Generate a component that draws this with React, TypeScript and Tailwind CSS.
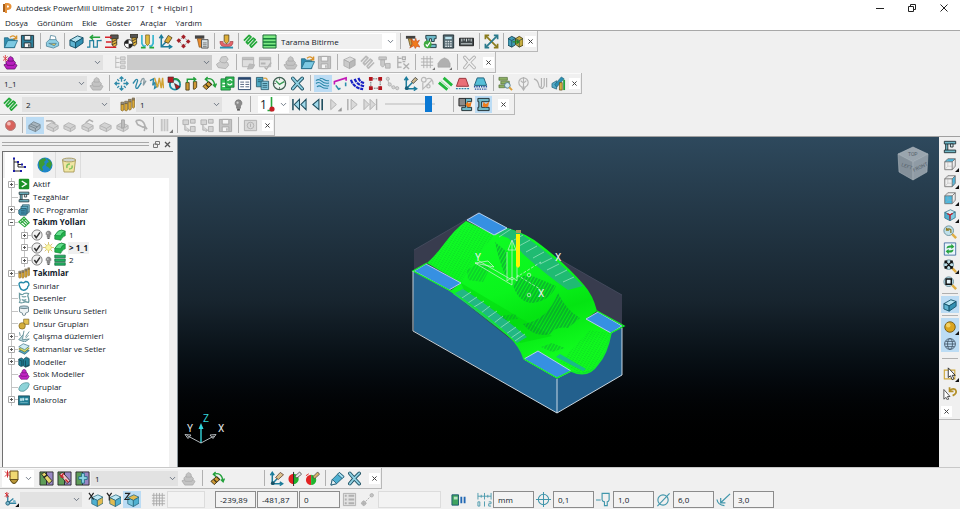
import type { ReactNode } from "react";
import { ChevronDown } from "lucide-react";
import clsx from "clsx";

// Shapes that several icons share
const cube = (top: string, left: string, right: string, line: string) => (
  <g stroke={line} strokeWidth="0.8" strokeLinejoin="round">
    <path d="M2 5 8.5 2 14 4.5 8 8z" fill={top} />
    <path d="M2 5 8 8v6.5l-6-3z" fill={left} />
    <path d="M14 4.5 8 8v6.5l6-3.5z" fill={right} />
  </g>
);

const stockPile = (fill: string, line: string) => (
  <g fill={fill} stroke={line} strokeWidth="0.8">
    <path d="M1 10.5 4 9l8-.5 3 2.5-2.5 4H4z" />
    <path d="M3 7.5 5 5.5h6l2.3 2.5-1.8 3h-7z" />
    <path d="M5.5 3.5 8 1.5l2.7 1.8.3 3.2H5.5z" />
  </g>
);

const floppy = (body: string, line: string) => (
  <g stroke={line}>
    <path d="M1.5 1.5h13v13h-13z" fill={body} />
    <path d="M4.5 1.5h7v5h-7zM4.5 9.5h7v5h-7z" fill="#f4f4f4" />
    <path d="M9.5 11v2.5" strokeWidth="1.5" />
  </g>
);

const tool = (
  <g stroke="#3a3526" strokeWidth="0.9">
    <path d="M6 1h8v4H6z" fill="#555" />
    <path d="M7.5 5h5v6.5L10 14l-2.5-2.5z" fill="#e0b13a" />
    <path d="m7.5 8.5 5-2.5M7.5 11.5l5-2.5" />
  </g>
);

const viewCube = (face: ReactNode) => (
  <g strokeLinejoin="round">
    {face}
    <path
      d="M2 5.5h8.5v9H2zM5.5 2H14v8.5l-3.5 4M2 5.5 5.5 2M10.5 5.5 14 2"
      fill="none"
      stroke="#666"
      strokeWidth="0.9"
    />
    <path d="M5.5 2v8.5H14M5.5 10.5 2 14.5" fill="none" stroke="#aaa" strokeWidth="0.5" />
  </g>
);

const snake = (color: string) => (
  <path
    d="M1 7 6.5 1.5 8.5 3 3.5 8.5 5 10.5 11 4.5 13 6 7.5 12 9 14l6-6"
    fill="none"
    stroke={color}
    strokeWidth="1.8"
    strokeLinejoin="round"
  />
);

const lens = (
  <g>
    <circle cx="6.5" cy="6.5" r="5.5" fill="#bfe0ea" stroke="#648a98" />
    <path d="m10.5 10.5 4.5 4.5" stroke="#dfae45" strokeWidth="2.8" />
  </g>
);

const graySteps = (
  <g fill="#d2d2d2" stroke="#a9a9a9" strokeWidth="0.8">
    <path d="m2 8 5-3 7 3v3.5l-5 3-7-3z" />
    <path d="m2 8 7 3.2 5-3.2M9 11.2v3.3" />
  </g>
);

const ring = "M3 2.5q4 5 10 11M13 2.5Q8 7 3 13.5";

const axes = (
  <g fill="none" stroke="#1b7c9b" strokeWidth="1.6">
    <path d="M3.5 2v11.5H14M3.5 13.5 10 7" />
    <path d="M1.5 4.5 3.5 1.5l2 3M11.5 11.5l3 2-3 2" />
  </g>
);

const icons: Record<string, ReactNode> = {
  open: (
    <g stroke="#1c6680" strokeWidth="0.8">
      <path d="M1.5 4h4l1 1.5h6v9h-11z" fill="#2f8db0" />
      <path d="M1.5 14.5 5 7h10.5L12 14.5z" fill="#7cc9e2" />
      <path d="M7.5 3.5Q11 0 14 4.5M14.5 1.5v3.5h-3.5" fill="none" stroke="#d8922b" strokeWidth="1.5" />
    </g>
  ),
  save: floppy("#2e7f9b", "#24333a"),
  print: (
    <g stroke="#487e94" strokeWidth="0.8">
      <path d="m5 7 1-5.5 5 1 1 4.5z" fill="#fff" />
      <path d="m1.5 9 3-3h7l3 3v3.5L9 15l-7.5-2z" fill="#8fcfe4" />
      <path d="m4 10h8l-2 2.5z" fill="#e8c75b" />
    </g>
  ),
  block: (
    <g stroke="#155168" strokeLinejoin="round">
      <path d="M1 6.5 9 2l6 2-8 5z" fill="#b4e3f1" />
      <path d="m1 6.5 6 2.5v6l-6-2.5z" fill="#5fb4d1" />
      <path d="m7 9 8-5v5.5L7 15z" fill="#3391b3" />
    </g>
  ),
  rapid: (
    <g fill="none" strokeWidth="1.3">
      <path d="M0 14h3V7h4v7h4V7h4v-1" stroke="#21809e" />
      <path d="M14 3.5H4M6.5 1 3.5 3.5l3 2.5" stroke="#24a23b" strokeWidth="1.5" />
    </g>
  ),
  feeds: (
    <g>
      {tool}
      <path d="M0 3.5h7M1 8.5h6M0 14h12" stroke="#d5222a" strokeWidth="1.6" />
    </g>
  ),
  ballTool: (
    <g>
      <g transform="translate(2 -1)">{tool}</g>
      <circle cx="6" cy="10.5" r="4.5" fill="#fff" stroke="#333" />
      <path d="M6 6v4.5H1.5A4.5 4.5 0 0 1 6 6M6 15v-4.5h4.5A4.5 4.5 0 0 1 6 15" fill="#222" />
    </g>
  ),
  leads: (
    <g fill="none" strokeWidth="1.8">
      <path d="M2 1v9q2 5 4 2M14 1v9q-2 5-4 2" stroke="#3ab6cf" />
      <path d="M1 14.5h5M10 14.5h5" stroke="#26a83a" />
      <path d="M6 1h4v9l-2 2.5L6 10z" fill="#e2be3d" stroke="#7a6124" strokeWidth="0.8" />
    </g>
  ),
  startPoint: (
    <g>
      {axes}
      <path d="m7 8 4-6.5 4 2.5-4 6z" fill="#d8ac38" stroke="#443818" strokeWidth="0.8" />
    </g>
  ),
  dots: (
    <g>
      <path d="m3 7 5-4 5 5-5 5z" fill="none" stroke="#777" strokeDasharray="1.5 1" />
      <g fill="#a32028">
        <path d="m3 4.5 2.5 2.5L3 9.5.5 7z" />
        <path d="m8 .5 2.5 2.5L8 5.5 5.5 3z" />
        <path d="m13 5.5 2.5 2.5-2.5 2.5L10.5 8z" />
        <path d="m8 10.5 2.5 2.5L8 15.5 5.5 13z" />
      </g>
    </g>
  ),
  toolCalc: (
    <g>
      <path d="M1 1.5h10V5H1z" fill="#444" />
      <path d="M3.5 5h5v9h-3z" fill="#eb8c2c" stroke="#6f4415" strokeWidth="0.6" />
      <path d="M8 6h7v9H8z" fill="#d8e1e4" stroke="#555" />
      <path d="M9.5 9.5h4M9.5 11.5h4M9.5 13.5h4" stroke="#777" />
    </g>
  ),
  verify: (
    <g>
      <path d="M1 8q0 6 7 6t7-6h-3q0 3-4 3T4 8z" fill="#e5646a" stroke="#8e2b31" strokeWidth="0.6" />
      <path d="M1 14.5h14" stroke="#2c90b0" strokeWidth="2" />
      <path d="M5.5 1h5v7L8 10.5 5.5 8z" fill="#e0b13a" stroke="#4e3f19" strokeWidth="0.8" />
    </g>
  ),
  path: snake("#22a838"),
  strategy: (
    <g>
      <path d="M1 1h14v14H1z" fill="#7dea83" stroke="#1b5f33" />
      <path d="M1 5h14M1 8.5h14M1 12h14" stroke="#167f3a" strokeWidth="1.5" />
    </g>
  ),
  collision: (
    <g>
      <path d="M1 2h10v3H1z" fill="#414141" />
      <path d="M3.5 5h4v8h-2z" fill="#c4a050" stroke="#584312" strokeWidth="0.7" />
      <path d="m6 5 4 3 1.5-3.5 1 3.5 3-1.5-2 3.5 2.5 4-3.5-1-1.5 2.5-1.5-3L5 15l3-4.5z" fill="#f07a1c" stroke="#b9310e" strokeWidth="0.5" />
    </g>
  ),
  machineOk: (
    <g>
      <path d="M3 1.5h11V5h-2v3h-3V5H7v6h7v3.5H4V5H3z" fill="#6db9c8" stroke="#223b42" />
      <circle cx="5" cy="11" r="4.2" fill="#3faa40" />
      <path d="m3 11 1.5 2 3-4" fill="none" stroke="#fff" strokeWidth="1.3" />
    </g>
  ),
  calculator: (
    <g>
      <path d="M2.5 1h11v14h-11z" fill="#566a72" stroke="#26343a" />
      <path d="M4.5 3h7v2.5h-7z" fill="#b9e3ee" />
      <path d="M4.5 8h7M4.5 10.5h7M4.5 13h7" stroke="#e1e8ea" strokeWidth="1.5" strokeDasharray="1.7 0.9" />
    </g>
  ),
  ruler: (
    <g>
      <path d="M.5 4.5h15v8H.5z" fill="#41484b" stroke="#222" />
      <path d="M3 5v3M5.5 5v2M8 5v3M10.5 5v2M13 5v3M2 10.5h12" stroke="#dfe6e8" />
    </g>
  ),
  expand: (
    <g stroke="#8a7b1c" strokeWidth="1.8" fill="none">
      <path d="m2 2 12 12" />
      <path d="M14 2 2 14" stroke="#2b7a8c" />
      <path d="M1.5 5.5v-4h4M14.5 10.5v4h-4" />
      <path d="M10.5 1.5h4v4M5.5 14.5h-4v-4" stroke="#2b7a8c" />
    </g>
  ),
  components: (
    <g strokeWidth="0.9">
      <path d="m0 5 4-2.5 4 2v7L4 14l-4-2z" fill="#419cb6" stroke="#173f4d" />
      <path d="m8 5 4-2.5 4 2.5v7l-4 2-4-3z" fill="#c6ad42" stroke="#4e4212" />
      <path d="M0 5l4 2 4-2.5M4 7v7M8 5l4 2 4-2M12 7v7" fill="none" stroke="#173f4d" strokeWidth="0.7" />
      <path d="M5 8.5h6M9 6.5l2.5 2-2.5 2" stroke="#23862d" strokeWidth="1.3" fill="none" />
    </g>
  ),
  stock: (
    <g>
      {stockPile("#b91fc0", "#5e0f66")}
      <path d="M0 1.5l5 4.5M5 1.5L0 6M2.5 0v7" stroke="#d8363a" strokeWidth="0.9" />
    </g>
  ),
  stockPlain: stockPile("#c223c4", "#661070"),
  stockOff: stockPile("#c3c3c3", "#a9a9a9"),
  treeOff: (
    <path d="M4 1v13M4 3.5h4M4 8h4M4 13h4M9 2h5v3H9zM9 6.5h5v3H9zM9 11.5h5v3H9z" fill="#d8d8d8" stroke="#bbb" />
  ),
  refreshOff: (
    <g fill="#cdcdcd" stroke="#a8a8a8" strokeWidth="0.8">
      <path d="m1.5 10 4-3 8 1 1 3-3 3.5-8-1z" />
      <path d="m5 6 2-4 5-.5 2 3-3 4-4-.5z" />
    </g>
  ),
  tableOff: (
    <g fill="#dedede" stroke="#b4b4b4">
      <path d="M1.5 2.5h12v10h-12z" />
      <path d="M1.5 4.5h12" strokeWidth="2" />
      <path d="m7 15 2-5.5 5.5 1-2 4z" fill="#bcbcbc" />
    </g>
  ),
  tableCheckOff: (
    <g fill="#dedede" stroke="#b4b4b4">
      <path d="M1.5 2.5h12v10h-12z" />
      <path d="M1.5 4.5h12M3 9h5" strokeWidth="2" />
      <path d="m7 13 2 2 5-7" fill="none" strokeWidth="1.6" />
    </g>
  ),
  saveOff: floppy("#c4c4c4", "#a9a9a9"),
  cubeOff: cube("#dcdcdc", "#cacaca", "#b9b9b9", "#a6a6a6"),
  snakeOff: snake("#b9b9b9"),
  toolOff: (
    <g fill="#c9c9c9" stroke="#adadad" strokeWidth="0.9">
      <path d="M2 2h8v3H2zM4 5h4v6l-2 2-2-2zM9 9h5v5H9z" />
    </g>
  ),
  treeCrossOff: (
    <path d="M3 1v13M3 3.5h4M3 8h4M3 13h4M8 2h3v3H8zM8 7h3M9 9l6 6M15 9l-6 6" fill="none" stroke="#b0b0b0" strokeWidth="1.4" />
  ),
  gridOff: (
    <g>
      <path d="M4 1v13M7.5 1v13M11 1v13M1 4h13M1 7.5h13M1 11h13" stroke="#b0b0b0" />
      <path d="M13 16h3v-3z" fill="#777" />
    </g>
  ),
  wedgeOff: (
    <g>
      <path d="m1 9 3-4 4-2 4 2 2 4v4H1z" fill="#b0b0b0" stroke="#a0a0a0" strokeWidth="0.6" />
      <path d="M13 16h3v-3z" fill="#777" />
    </g>
  ),
  crossOff: (
    <g fill="none" strokeLinecap="round">
      <path d={ring} stroke="#b0b0b0" strokeWidth="3.6" />
      <path d={ring} stroke="#efefef" strokeWidth="1.8" />
    </g>
  ),
  cross: (
    <g fill="none" strokeLinecap="round">
      <path d={ring} stroke="#1d4f61" strokeWidth="3.8" />
      <path d={ring} stroke="#8fd0e2" strokeWidth="2" />
    </g>
  ),
  spread: (
    <path
      d="M8 1v5M8 10v5M1 8h5M10 8h5M6 3l2-2 2 2M6 13l2 2 2-2M3 6 1 8l2 2M13 6l2 2-2 2M3.5 3.5l2 2M12.5 3.5l-2 2M3.5 12.5l2-2M12.5 12.5l-2-2"
      fill="none"
      stroke="#2d89a8"
      strokeWidth="1.4"
    />
  ),
  wave: (
    <g fill="none" strokeWidth="1.4">
      <path d="m1 8 3-4q2-1 2 1L4 11q0 3 2 2l4-6" stroke="#2d89a8" />
      <path d="m9 7 2-4q2-1 2 1l-1 6 3-5" stroke="#8a9da4" />
    </g>
  ),
  waveGold: (
    <g fill="none" strokeWidth="1.5">
      <path d="m1 5 4-2-1 7 3-4-1 7 4-3" stroke="#2d89a8" />
      <path d="m6 2 3 10 2-10 2 11 1.5-11 1 11" stroke="#d1a335" />
    </g>
  ),
  clockTool: (
    <g>
      <circle cx="8.5" cy="9" r="5.5" fill="#dff2f6" stroke="#1e8ea6" strokeWidth="2" />
      <path d="M1 1h6v6H1z" fill="#b31d24" stroke="#222" strokeWidth="0.5" />
      <path d="m8 8 6 3.5-4 3z" fill="#b31d24" stroke="#222" strokeWidth="0.6" />
      <path d="M7 3q5-1 7 4" fill="none" stroke="#21963a" strokeWidth="1.6" />
    </g>
  ),
  toolsArc: (
    <g>
      <path d="M2 15V7h3.5v8zM10 14V6h3.5v6l-2 2z" fill="#cf9a35" stroke="#4a3a14" strokeWidth="0.9" />
      <path d="M3.5 7V3.5H12v2M10 1.5l2.500 2L10 6" fill="none" stroke="#23a13c" strokeWidth="1.5" />
    </g>
  ),
  toolTurn: (
    <g>
      <path d="m1 11 6-5 3.5 3-6 5.5z" fill="#cf9a35" stroke="#3d3214" />
      <path d="m4 9 3 3M7 6l3.5 3.5" stroke="#3d3214" strokeWidth="1.3" />
      <path d="M4 3.5q8-3 10 7M6 1 3.5 3.5 6.5 6M11.5 9l2.5 2.5 1.5-3.5" fill="none" stroke="#23a13c" strokeWidth="1.4" />
    </g>
  ),
  recycle: (
    <g>
      <path d="M1 3h10v12H1z" fill="#35c159" stroke="#127433" strokeWidth="0.8" />
      <path d="M6 1h9v11H6z" fill="#2fb352" stroke="#127433" strokeWidth="0.8" />
      <path d="M8 5q3-3 5 0M13 8q-3 3-5 0M2.5 8h3M2.5 11h3" fill="none" stroke="#fff" strokeWidth="1.4" />
    </g>
  ),
  table: (
    <g>
      <path d="M1.5 1.5h13v13h-13z" fill="#fff" stroke="#27456c" />
      <path d="M1.5 3h13" stroke="#27456c" strokeWidth="2" />
      <path d="M3.5 6.5h4M3.5 9h4M3.5 11.5h4M9 6.5h4M9 9h4M9 11.5h4" stroke="#50607c" />
    </g>
  ),
  copy: (
    <g stroke="#1f4f60" strokeWidth="0.8">
      <path d="M1.5 1.5h7v10h-7z" fill="#4da8c2" />
      <path d="M6.5 5.5h8v9h-8z" fill="#7ec4d8" />
      <path d="M8 8h5M8 10h5M8 12h5M3 4h4M3 6h3" />
      <path d="M9 2.5q4-1 4 2" fill="none" stroke="#d9a13e" strokeWidth="1.3" />
    </g>
  ),
  clock: (
    <g fill="none">
      <circle cx="8" cy="8" r="6.5" fill="#eef6f0" stroke="#3f5f52" strokeWidth="1.4" />
      <path d="m4 5 4 4 5-3" stroke="#3a9b56" strokeWidth="1.5" />
      <path d="M8 2.5v1.5M8 12v1.5M2.5 8H4" stroke="#444" />
    </g>
  ),
  passes: (
    <g fill="none" stroke="#2786a7" strokeWidth="1.1">
      <path d="M1 5q3-2.500 6 .5t8 2M1 8q3-2.500 6 .5t8 2M2 11.500q2.500-2 5 0t7 1.500M5 2.500q3 0 5 1.500t5 1" />
    </g>
  ),
  leadLinks: (
    <g fill="none" strokeWidth="1.7">
      <path d="M1.5 9V6L14 2v3" stroke="#c218b7" />
      <path d="m3 10 3 4 2-1M13.5 7v4" stroke="#2a8dab" />
    </g>
  ),
  arcs: (
    <path d="M1 4q3 9 13 10M5 3q2 6 10 8M9 2q1 4 6 5.5" fill="none" stroke="#1720c4" strokeWidth="2.3" strokeDasharray="4 0.8" />
  ),
  redNodes: (
    <g>
      <path d="M3 3h10v10H3z" fill="none" stroke="#555" strokeDasharray="1.5 1" />
      <path d="M1 1h4v4H1zM11 1h4v4h-4zM1 11h4v4H1zM11 11h4v4h-4z" fill="#b3141c" />
    </g>
  ),
  nodesOff: (
    <g fill="#d4d4d4" stroke="#b4b4b4">
      <path d="m3 3 1 6 5 3 4 1" fill="none" />
      <circle cx="3" cy="3" r="1.7" />
      <circle cx="5" cy="9" r="1.7" />
      <circle cx="9" cy="12" r="1.7" />
      <circle cx="13" cy="13" r="1.7" />
    </g>
  ),
  axesTool: (
    <g>
      {axes}
      <path d="m9 6 4-4.5 2.5 2L11 8z" fill="#c8b68c" stroke="#333" strokeWidth="0.8" />
      <circle cx="4" cy="13" r="2" fill="#175f79" />
    </g>
  ),
  gearsOff: (
    <g fill="none" stroke="#b9b9b9" strokeWidth="1.3">
      <circle cx="4" cy="4" r="2.5" />
      <path d="M3 7v7l4-4 6-6M7 3q7-2 7 6" />
      <circle cx="9" cy="11" r="1.8" />
    </g>
  ),
  greenSlashes: (
    <g fill="none" stroke="#21b83c" strokeWidth="3">
      <path d="m1 7 9 7.500M6 2l9 8" />
      <path d="m3 5 9.5 8" stroke="#8ae59a" strokeWidth="1" />
    </g>
  ),
  redTrap: (
    <g>
      <path d="M4.5 2.5h7L14.5 11h-13z" fill="#ea6f77" stroke="#963038" />
      <path d="M1 13.5h14" stroke="#2d89a8" strokeDasharray="2 1" strokeWidth="1.5" />
    </g>
  ),
  tealTrap: (
    <g>
      <path d="M4.5 2h7l3 8h-13z" fill="#56bfd8" stroke="#1c5e78" />
      <path d="M1 11.5h14M2 14h13" stroke="#2450a0" strokeDasharray="1.5 1" strokeWidth="1.5" />
    </g>
  ),
  inspect: (
    <g>
      <path d="M1 1.5h9v3H1zM3 5.5h9v3H3zM1 9.5h6v3H1z" fill="#8cae62" stroke="#4d6b32" strokeWidth="0.7" />
      <circle cx="10" cy="10" r="3" fill="#cfe8ef" stroke="#527986" />
      <path d="m12 12 3 3" stroke="#dca13a" strokeWidth="2" />
    </g>
  ),
  globeOff: (
    <g fill="none" stroke="#b2b2b2" strokeWidth="1.2">
      <circle cx="8" cy="7" r="5" />
      <path d="M8 1v14M5 5q3 4 6 0M6 12l2 3 2-3" />
    </g>
  ),
  magnetOff: <path d="M1 3q4 1 5 6 1 5 3 2V2M12 2v8q-1 4-4 3M14.5 2v10" fill="none" stroke="#b2b2b2" strokeWidth="1.3" />,
  simulate: (
    <g>
      <path d="m1 8 5-3v9l-5-2z" fill="#55aac6" stroke="#1b5c73" strokeWidth="0.7" />
      <path d="m4 9 7-8 3 2-8 9z" fill="#2c8fb3" stroke="#1b5c73" strokeWidth="0.6" />
      <path d="M9 15V7h3v8z" fill="#d6ae3d" stroke="#5b4613" strokeWidth="0.7" />
      <path d="M14 4v11" stroke="#23a13c" strokeWidth="2" />
    </g>
  ),
  toolbox: (
    <g fill="#dba936" stroke="#6c521a" strokeWidth="0.6">
      <path d="M1 8h3v6l-1.5 1L1 14zM5 7h3v7l-1.5 1L5 14zM9 5h3v8l-1.5 1L9 13zM13 3h2.5v8L14 12l-1-1z" />
      <path d="M1 5.5h3V8H1zM5 4.5h3V7H5zM9 2.5h3V5H9zM13 1h2.5v2H13z" fill="#8a8a8a" />
    </g>
  ),
  bulb: (
    <g>
      <path d="M8 3a3.600 3.600 0 0 0-2 6.600V12h4V9.600A3.600 3.600 0 0 0 8 3z" fill="#8b8b8b" stroke="#6f6f6f" strokeWidth="0.8" />
      <path d="M6.5 12.5h3v2h-3z" fill="#555" />
      <circle cx="7" cy="6" r="1.2" fill="#cfcfcf" />
    </g>
  ),
  bulbOn: (
    <g>
      <path d="M8 0v16M0 8h16M2.5 2.5l11 11M13.5 2.5l-11 11" stroke="#c9a93a" />
      <circle cx="8" cy="8" r="4.2" fill="#fbf6a4" stroke="#d8ca70" />
    </g>
  ),
  toFirst: (
    <g fill="#9fd8ea" stroke="#1d4d5e" strokeWidth="1.1">
      <path d="M1 2v12" strokeWidth="1.6" />
      <path d="M8 2.5v11L2.5 8zM15 2.5v11L9.5 8z" />
    </g>
  ),
  stepBack: (
    <g fill="#9fd8ea" stroke="#1d4d5e" strokeWidth="1.1">
      <path d="M9.5 2.5v11L3 8z" />
      <path d="M13 2v12" strokeWidth="1.7" />
    </g>
  ),
  playOff: (
    <g fill="#d9d9d9" stroke="#b0b0b0">
      <path d="M4 2.5v11L10 8z" />
      <path d="M12 15h3.5v-3.5z" fill="#888" />
    </g>
  ),
  stepOff: (
    <g fill="#d9d9d9" stroke="#b0b0b0">
      <path d="M6.5 2.5v11L13 8z" />
      <path d="M3 2v12" strokeWidth="1.6" />
    </g>
  ),
  toLastOff: (
    <g fill="#d9d9d9" stroke="#b0b0b0">
      <path d="M1 2.5v11L6.5 8zM7.5 2.5v11L13 8z" />
      <path d="M14.5 2v12" strokeWidth="1.5" />
    </g>
  ),
  machineSim: (
    <g>
      <path d="M1 1.5h7v8H1z" fill="#8b8b8b" stroke="#222" />
      <path d="M8 1.5h6.5V5H10v6h4.5v3.5H4V11h4z" fill="#71b9c8" stroke="#1f2d31" />
      <path d="m8 8 2-3 1.5 2L14.5 5l-1 5-3 1z" fill="#ef7d1c" />
    </g>
  ),
  machineFire: (
    <g>
      <path d="M2 1.5h12V5H6v6h8v3.5H2V11h1V5H2z" fill="#71b9c8" stroke="#1f2d31" />
      <path d="m7 10 1-5 2.5 2.5L14 5l-1 5-3 1z" fill="#ef7d1c" />
    </g>
  ),
  // C-frame: head on top, column at the left, table at the bottom
  machine: (
    <g fill="#71b9c8" stroke="#1f2d31">
      <path d="M3 4h2.500v8H3z" />
      <path d="M1.500 1.500h13v3h-13zM1.500 11.500h13v3h-13z" />
      <path d="M8.500 4.500h3v3.500h-3z" fill="#d9e6ea" />
    </g>
  ),
  record: (
    <g>
      <circle cx="8" cy="8" r="5.3" fill="#d9625c" stroke="#aa7a77" />
      <circle cx="6.3" cy="6" r="2" fill="#f4bab6" />
    </g>
  ),
  viewStepsOn: (
    <g fill="#a9b6bf" stroke="#6f7d86" strokeWidth="0.8">
      <path d="m2 8 5-4 7 3v4l-5 3.5-7-3z" />
      <path d="m2 8 7 3 5-4M4 6.5l7 3M9 11v3.5" />
    </g>
  ),
  stepsA: (
    <g>
      {graySteps}
      <path d="M1 3h6l4 3" fill="none" stroke="#b0b0b0" strokeWidth="1.8" />
    </g>
  ),
  stepsB: graySteps,
  stepsC: (
    <g>
      {graySteps}
      <path d="m6 5 4-3 4 2" fill="none" stroke="#b0b0b0" strokeWidth="1.5" />
    </g>
  ),
  stepsD: (
    <g>
      {graySteps}
      <path d="M7 11V2h3v8z" fill="#bdbdbd" stroke="#a4a4a4" />
    </g>
  ),
  rotateOff: (
    <path d="M3 3q8-3 10 6l-3 1M3 3l2 4 6 3M12 14l1-5 2 3" fill="none" stroke="#b0b0b0" strokeWidth="1.7" />
  ),
  stripesOff: (
    <g>
      <path d="M4 1v13M7 1v13M10 1v13" stroke="#c4c4c4" strokeWidth="2" />
      <path d="M12 16h4v-4z" fill="#777" />
    </g>
  ),
  boxesOff: (
    <path d="M1 2h6v5H1zM9 1.5h5v4H9zM3 7v6h5M9 9h5v5.5H9zM6 11l2 2-2 2" fill="#d5d5d5" stroke="#b0b0b0" />
  ),
  cameraOff: (
    <g fill="#d9d9d9" stroke="#b0b0b0">
      <path d="M1.5 2.5h13v11h-13z" />
      <circle cx="8" cy="8" r="3.5" />
      <path d="M8 6v3.5" />
    </g>
  ),
  cubeTop: viewCube(<path d="M2 5.5 5.5 2H14l-3.5 3.5z" fill="#4cb9e0" />),
  cubeSide: viewCube(<path d="M10.5 5.5 14 2v8.5l-3.5 4z" fill="#4cb9e0" />),
  cubeFront: viewCube(<path d="M2 5.5h8.5v9H2z" fill="#4cb9e0" />),
  cubeIso: (
    <g>
      {cube("#d4eef6", "#4fb0d0", "#7fcbe2", "#27677e")}
      <path d="M8 8v5M8 8 5 6.5M8 8l3-1.8" stroke="#c9232c" strokeWidth="1.5" />
    </g>
  ),
  zoomBack: (
    <g>
      {lens}
      <path d="M9 9V5.5q-2.5-2-5 0M4 3v3h3" fill="none" stroke="#8d7b23" strokeWidth="1.4" />
    </g>
  ),
  refresh: (
    <g>
      <path d="M1.5 1h13v14h-13z" fill="#e9f4fb" stroke="#3f6b9e" />
      <path d="M4 7.5q0-4 5.5-3.5V2l3.5 3.5L9.5 8V6.2q-3 0-5.5 1.3zM12 8.5q0 4-5.5 3.5v2L3 10.5 6.5 8v1.8q3 0 5.5-1.3z" fill="#26a43e" />
    </g>
  ),
  zoomAll: (
    <g>
      {lens}
      <path d="m3 3 7 7M10 3l-7 7M2.5 5V2.5H5M8 2.5h2.5V5M10.5 8v2.5H8M5 10.5H2.5V8" fill="none" stroke="#111" strokeWidth="1.5" />
    </g>
  ),
  zoomBox: (
    <g>
      {lens}
      <path d="M3.5 3.5h6v6h-6z" fill="#e6f5fa" stroke="#111" strokeWidth="1.7" />
    </g>
  ),
  shaded: (
    <g>
      <circle cx="8" cy="8" r="6" fill="#dba520" stroke="#6f5714" />
      <circle cx="6" cy="6" r="2.5" fill="#f2d166" />
    </g>
  ),
  wire: (
    <g fill="none" stroke="#46596b">
      <circle cx="8" cy="8" r="6.2" />
      <ellipse cx="8" cy="8" rx="2.8" ry="6.2" />
      <path d="M2 8h12M3 5h10M3 11h10" />
    </g>
  ),
  pick: (
    <g>
      <path d="M1.5 3.5h12v10h-12z" fill="none" stroke="#cda73b" strokeWidth="1.3" />
      <path d="M6 1v11l2.5-2 2 4.5 2-1-2-4h3.5z" fill="#fff" stroke="#222" />
    </g>
  ),
  pickBack: (
    <g>
      <path d="M1 4v11l2.5-2 1.5 3 1.5-1L5 12h3z" fill="#fff" stroke="#444" />
      <path d="M11 11q6-3 3-7-3-2-6 1M7.5 1.5V6H12" fill="none" stroke="#b3902a" strokeWidth="2" />
    </g>
  ),
  explorer: (
    <g>
      <path d="M3 1v13h7M3 5h4v5h7M7 7.5h4" fill="none" stroke="#222" />
      <path d="M2 .5h2v2H2zM2 13h2v2H2zM6 4h2v2H6zM10 6.5h2v2h-2zM13 9h2v2h-2zM9 13h2v2H9z" fill="#1b1ca8" />
    </g>
  ),
  globe: (
    <g>
      <circle cx="8" cy="8" r="7.5" fill="#1e86c8" />
      <path d="M2 4q3-3 6-3l1 2-2 2 1 2-3 3 1 3-1 1Q1 11 2 4zM10 2q4 1 5 5l-2 5-2-2-2-1 1-3 2-1z" fill="#3d9a33" />
    </g>
  ),
  bin: (
    <g stroke="#a0904d" strokeWidth="0.8">
      <path d="m1.5 3 1.5 12h10l1.5-12z" fill="#f0e6a4" />
      <ellipse cx="8" cy="3" rx="6.7" ry="1.9" fill="#cfd4cf" />
      <path d="M6 11q-1-4 3-4M8 12q4 0 3-3.5" fill="none" stroke="#7fc25e" strokeWidth="1.5" />
    </g>
  ),
  active: (
    <g>
      <rect x="1" y="1" width="14" height="14" rx="1.5" fill="#1b9227" />
      <path d="m5 4 6 4-6 4" fill="none" stroke="#fff" strokeWidth="2" />
    </g>
  ),
  nc: (
    <g stroke="#1b4c5d" strokeWidth="0.9">
      <path d="M6 1h9v10H6z" fill="#8ac8da" />
      <path d="M4 3h9v10H4z" fill="#63aec6" />
      <path d="m1 8 3-2h7v9H3l-2-2z" fill="#408fab" />
      <path d="M4 9h5M4 12h5" />
    </g>
  ),
  pathOpen: (
    <path d="M1 8 8 1.5 15 9l-6 5.5zM3.5 5.5 11.5 13M6 3.5l7.5 7.5M10 4 3 10" fill="none" stroke="#2aa83c" strokeWidth="1.5" />
  ),
  check: (
    <g>
      <circle cx="8" cy="8" r="6.8" fill="#f2f2f2" stroke="#777" strokeWidth="1.2" />
      <path d="m4.5 8 2.5 3.5 5-7" fill="none" stroke="#333" strokeWidth="2" />
    </g>
  ),
  greenBlock: (
    <g stroke="#0f7a33" strokeWidth="0.8">
      <path d="M1 8.5Q6 1 10 1.5l5 1.5v6q-4 1-6 6l-8-1.5z" fill="#22b24c" />
      <path d="M1 8.5Q6 1 10 1.5l5 1.5q-5 1.5-6 6z" fill="#63e08c" />
    </g>
  ),
  greenBars: (
    <path d="M1 1.5h14v3.5H1zM1 6.5h14V10H1zM1 11.5h14V15H1z" fill="#22b060" stroke="#0c5f38" strokeWidth="0.9" />
  ),
  boundary: (
    <path d="M2 8Q0 3 5 3q2 2 5-1 5 0 4.5 5-2 2-2 4-4 4-7 2-2 0-3.5-5z" fill="none" stroke="#2389a8" strokeWidth="1.8" />
  ),
  pattern: (
    <path d="M2 2q4 3 6 0 3-1 6 0-2 3 0 6 1 4 0 6-5-2-7 0-3 1-5 0 2-3 0-6 0-3 0-6zM5 6q3 1 6 0M5 10q3 2 6 0" fill="none" stroke="#6b9aa0" strokeWidth="1.7" />
  ),
  hole: (
    <g fill="#eef3f4" stroke="#4f6b75">
      <path d="M2 3v6l4 2v2q2 2 4 0v-2l4-2V3z" />
      <ellipse cx="8" cy="3" rx="6" ry="1.8" fill="#b9d4dc" />
    </g>
  ),
  feature: (
    <g stroke="#6d5719" strokeWidth="0.8">
      <path d="M7.5 1.5h7v7h-7z" fill="#e3c14e" />
      <circle cx="5.5" cy="10.5" r="4.3" fill="#d3ad3b" />
    </g>
  ),
  workplane: (
    <path d="m1 13 6-7-1 7 9-1-6 4zM7 6l1-5M10 9l5-7M3 8 2 3M10 11l4-4" fill="#b9d7dc" stroke="#628d97" strokeWidth="1.2" />
  ),
  layers: (
    <g strokeWidth="0.9">
      <path d="m1 11 6-4 8 3-6 5z" fill="#55a7c4" stroke="#1b5566" />
      <path d="m1 8 6-4 8 3-6 5z" fill="#e2e26b" stroke="#6f7420" />
      <path d="m1 5 6-4 8 3-6 5z" fill="#d3edf4" stroke="#356f82" />
    </g>
  ),
  model: (
    <g stroke="#123f4b" strokeWidth="0.9">
      <path d="m1 4 4-1.5 2 2 4-3 4 2V13l-5 2-3-2-3 1-3-2z" fill="#1f7d94" />
      <path d="m1 5 4 1.5v6.5M7 5v7M10 6v8l5-2" fill="none" />
    </g>
  ),
  group: <path d="M1 10.5q2-7 8-8 6-1 6 2-1 6-7 9-7 1-7-3z" fill="#8ed3d8" stroke="#4b8f96" />,
  macro: (
    <g>
      <path d="M.5 2.5h15v12H.5z" fill="#1f7d94" stroke="#123f4b" />
      <path d="M3 6h2v3H3zM6 5.5h2v3H6zM10 6h3v2h-3zM3 11.5h10" fill="#c9ecf4" stroke="#c9ecf4" strokeWidth="0.6" />
    </g>
  ),
  newTool: (
    <g>
      <path d="M6 1h8v8.5q-4 8-8 0z" fill="#f0d871" stroke="#65511b" />
      <path d="M6 9.5h8q-4 8-8 0z" fill="#bb9838" stroke="#65511b" />
      <path d="M1 1.5l5 5M6 1.5l-5 5M3.5.5v7" stroke="#d32b30" />
    </g>
  ),
  holderA: (
    <g stroke="#222" strokeWidth="0.9">
      <path d="M1 1h7v14H1z" fill="#5e9c58" />
      <path d="M8 1h7v14H8z" fill="#9987c4" />
      <path d="m2.5 3 3.5-1.5 8 9-3.5 3z" fill="#e6d46b" />
      <path d="m5 7 4-3" strokeWidth="1.5" />
    </g>
  ),
  holderB: (
    <g stroke="#222" strokeWidth="0.9">
      <path d="M1 1h7v14H1z" fill="#5e9c58" />
      <path d="M8 1h7v14H8z" fill="#9987c4" />
      <path d="m2.5 3 3.5-1.5 8 9-3.5 3z" fill="#f0c6ca" />
      <path d="m3 4 4 3M7 2.5 4 7M9 9l3 3" stroke="#c9232c" strokeWidth="1.5" />
    </g>
  ),
  holderC: (
    <g stroke="#222" strokeWidth="0.9">
      <path d="M1 1h7v14H1z" fill="#5e9c58" />
      <path d="M8 1h7v14H8z" fill="#9987c4" />
      <path d="M4 6h3V2.5h3V6h3v3h-3v4H7V9H4z" fill="#8fd6e6" stroke="#1c6a80" />
    </g>
  ),
  pinRed: (
    <g>
      <path d="M7 3a5.5 5.5 0 0 0 0 11z" fill="#e32222" />
      <path d="M7 3a5.5 5.5 0 0 1 0 11z" fill="#1fb52d" />
      <path d="M7 1v15" stroke="#222" />
      <path d="m8.5 5.5 5-4.5 2 2.5-5 4z" fill="#e4e4e4" stroke="#444" strokeWidth="0.8" />
    </g>
  ),
  pinGreen: (
    <g>
      <path d="M6.5 4a5.5 5.5 0 0 0 0 11z" fill="#e32222" />
      <path d="M6.5 4a5.5 5.5 0 0 1 0 11z" fill="#1fb52d" />
      <path d="m8 6.5 5.5-5.5 2 2.5-5 4.5z" fill="#d8b26a" stroke="#444" strokeWidth="0.8" />
      <path d="m1 5 3-2" stroke="#e32222" />
    </g>
  ),
  axesPin: (
    <g>
      {axes}
      <circle cx="4" cy="13" r="2" fill="#185266" />
      <path d="m7 7 5-5.5 3.5 2.5-5.5 5z" fill="#dac08c" stroke="#5a3a2a" strokeWidth="0.8" />
    </g>
  ),
  pencil: (
    <g stroke="#1c5871" strokeWidth="0.9">
      <path d="m1 15 1.5-6L10 1.5 15 6l-8 7.5z" fill="#4db0d2" />
      <path d="m1 15 1.5-6L7 13.5z" fill="#e8f3f6" />
      <path d="M10 1.5 15 6l-2 2-5-4.5z" fill="#a7dff0" />
    </g>
  ),
  planeAxes: (
    <g>
      <path d="M4 3v9h9M4 12l6-5" fill="none" stroke="#3283a0" strokeWidth="1.4" />
      <circle cx="4" cy="12" r="2" fill="#7ab8ce" stroke="#25637b" />
      <circle cx="11" cy="10" r="1.5" fill="#7ab8ce" />
      <path d="M1 1l4 4M5 1 1 5M3 0v6" stroke="#d32b30" />
      <path d="M12 16h4v-4z" fill="#111" />
    </g>
  ),
  cubeX: (
    <g>
      <g transform="translate(2 1)">{cube("#bfe8f4", "#4fb0d0", "#e2bb50", "#27677e")}</g>
      <path d="m1 1 5 7M6 1 1 8" stroke="#222" strokeWidth="1.3" />
    </g>
  ),
  cubeY: (
    <g>
      <g transform="translate(2 1)">{cube("#bfe8f4", "#e2bb50", "#4fb0d0", "#27677e")}</g>
      <path d="m1 1 2.5 3.5L6 1M3.5 4.5V9" stroke="#222" strokeWidth="1.3" fill="none" />
    </g>
  ),
  cubeZ: (
    <g>
      <g transform="translate(2 1)">{cube("#e2bb50", "#79c7df", "#4fb0d0", "#27677e")}</g>
      <path d="M1 1.5h5L1 8h5" stroke="#222" strokeWidth="1.3" fill="none" />
    </g>
  ),
  grid: <path d="M3 1v14M6 1v14M9 1v14M12 1v14M1 3.5h14M1 6.5h14M1 9.5h14M1 12.5h14" fill="none" stroke="#a5a5a5" strokeWidth="0.9" />,
  listOff: (
    <g fill="#e2e2e2" stroke="#b0b0b0">
      <path d="M1.5 1.5h13v13h-13z" />
      <path d="M3 4h2M3 8h2M3 12h2M7 4h6M7 8h6M7 12h6" strokeWidth="2" />
    </g>
  ),
  linkOff: (
    <g fill="#c4c4c4" stroke="#b0b0b0">
      <path d="M4 12 12 4" strokeDasharray="2 1" />
      <circle cx="4" cy="12" r="2.2" />
      <circle cx="12.5" cy="3.5" r="1.8" />
      <path d="M1 12h6M4 9v6" />
    </g>
  ),
  ncPause: (
    <g>
      <path d="M1 3h7v11H1z" fill="#3fa35e" stroke="#1b5a70" />
      <path d="M3 5h4v3H3z" fill="#b9e2c3" />
      <path d="M11 5v7M14.5 5v7" stroke="#2268b4" strokeWidth="2" />
    </g>
  ),
  scale: (
    <g fill="none" stroke="#4d9bae">
      <path d="M1 1v7M8 1v7M15 1v7M1 4.5h14M4.5 3v3M11.5 3v3" />
      <path d="M1 10.5h2v4.5H1zM8 10v5.5M12.5 10.5H15v2h-2.5v2.5H15" />
    </g>
  ),
  target: (
    <g fill="none" stroke="#4196ab" strokeWidth="1.1">
      <circle cx="8" cy="8" r="5.5" />
      <path d="M8 0v16M0 8h16" />
    </g>
  ),
  thickness: (
    <g fill="none" stroke="#4196ab" strokeWidth="1.2">
      <path d="M0 8.5h5M6.5 1.5H14v7q-.5 2-2 2v4H9v-4q-2 0-2.5-2z" />
    </g>
  ),
  diameter: (
    <g fill="none" stroke="#4196ab" strokeWidth="1.2">
      <circle cx="7.5" cy="8.5" r="5.5" />
      <path d="M1.5 15 14.5 1.5" />
    </g>
  ),
  tipRadius: (
    <g fill="none" stroke="#4196ab" strokeWidth="1.3">
      <path d="M15 2 5 11.5M5 6.5v5h5M1 8q1 6 8 6.5" />
    </g>
  ),
  pointMark: (
    <g>
      <path d="M4.5 1v14M.5 14.5H5" stroke="#27a73c" strokeWidth="1.6" fill="none" />
      <circle cx="5" cy="13" r="2.6" fill="#c51e25" />
    </g>
  ),
};

function Icon({ name, className = "size-4" }: { name: string; className?: string }) {
  return (
    <svg viewBox="0 0 16 16" aria-hidden="true" className={clsx("shrink-0", className)}>
      {icons[name]}
    </svg>
  );
}

function Tools({ names, className, active }: { names: string[]; className: string; active?: string }) {
  return (
    <div className={clsx("flex h-[17px] shrink-0", className)}>
      {names.map((name, i) => (
        <button
          key={name + i}
          type="button"
          aria-label={name}
          className={clsx(
            "flex flex-1 items-center justify-center",
            name === active ? "bg-[#bcdcf4]" : "hover:bg-[#dcebf7]"
          )}
        >
          <Icon name={name} className="size-[15px]" />
        </button>
      ))}
    </div>
  );
}

function Sep() {
  return (
    <div className="flex w-2 shrink-0 justify-center">
      <div className="h-4 w-px bg-[#b0b0b0]" />
    </div>
  );
}

function Drop({ label, value, className }: { label: string; value: string; className: string }) {
  return (
    <div className={clsx("grid h-[15px] shrink-0 items-center", className)}>
      <select
        aria-label={label}
        className="col-start-1 row-start-1 h-full w-full appearance-none bg-transparent pl-1 text-[8px] leading-[15px] outline-none"
      >
        <option>{value}</option>
      </select>
      <ChevronDown className="pointer-events-none col-start-1 row-start-1 mr-px size-[9px] justify-self-end text-gray-600" />
    </div>
  );
}

function CloseMark() {
  return (
    <button
      type="button"
      aria-label="Close toolbar"
      className="flex h-3 w-[14px] shrink-0 items-center justify-center"
    >
      <span className="flex size-[11px] items-center justify-center bg-white">
        <svg viewBox="0 0 6 6" className="size-[5px]" aria-hidden="true">
          <path d="m.5.5 5 5M5.5.5l-5 5" stroke="#444" strokeWidth="1.2" />
        </svg>
      </span>
    </button>
  );
}

function Bar({ children }: { children: ReactNode }) {
  return (
    <div className="flex">
      <div className="flex h-[21px] items-center border-r border-b border-[#b8b8b8] pl-0.5 shadow-[inset_0_1px_0_#fafafa]">
        {children}
      </div>
    </div>
  );
}

function Field({ label, value, className = "w-[41px]" }: { label: string; value: string; className?: string }) {
  return (
    <input
      aria-label={label}
      defaultValue={value}
      className={clsx(
        "h-[17px] shrink-0 border bg-[#f3f3f3] px-1 text-[8px] text-gray-900 outline-none",
        value ? "border-[#8c8c8c]" : "border-[#dcdcdc]",
        className
      )}
    />
  );
}

type Node = { label: string; icon: string; open?: boolean; leaf?: boolean; bold?: boolean; child?: boolean; lit?: boolean };

const nodes: Node[] = [
  { label: "Aktif", icon: "active" },
  { label: "Tezgâhlar", icon: "machine", leaf: true },
  { label: "NC Programlar", icon: "nc" },
  { label: "Takım Yolları", icon: "pathOpen", open: true, bold: true },
  { label: "1", icon: "greenBlock", child: true },
  { label: "> 1_1", icon: "greenBlock", child: true, bold: true, lit: true },
  { label: "2", icon: "greenBars", child: true },
  { label: "Takımlar", icon: "toolbox", bold: true },
  { label: "Sınırlar", icon: "boundary", leaf: true },
  { label: "Desenler", icon: "pattern", leaf: true },
  { label: "Delik Unsuru Setleri", icon: "hole", leaf: true },
  { label: "Unsur Grupları", icon: "feature", leaf: true },
  { label: "Çalışma düzlemleri", icon: "workplane" },
  { label: "Katmanlar ve Setler", icon: "layers" },
  { label: "Modeller", icon: "model" },
  { label: "Stok Modeller", icon: "stockPlain", leaf: true },
  { label: "Gruplar", icon: "group", leaf: true },
  { label: "Makrolar", icon: "macro" },
];

// Guide line and plus/minus box in front of a tree row
function Branch({ box, minus, line = true }: { box?: boolean; minus?: boolean; line?: boolean }) {
  return (
    <svg viewBox="0 0 13 13" className="h-[13px] w-[13px] shrink-0" aria-hidden="true">
      <path d={line ? "M6.5 0v13M6.5 6.5H13" : "M6.5 0v13"} stroke="#c4c4c4" />
      {box && <path d="M3.5 3.5h6v6h-6z" fill="#fff" stroke="#aaa" />}
      {box && <path d={minus ? "M5 6.5h3" : "M5 6.5h3M6.5 5v3"} stroke="#555" />}
    </svg>
  );
}

function Tree() {
  return (
    <ul className="grid h-57 auto-rows-fr pl-0.5">
      {nodes.map((n) => (
        <li key={n.label} className="flex items-center">
          {n.child ? (
            <>
              <Branch line={false} />
              <Branch box />
              <Icon name="check" className="size-3" />
              <Icon name={n.lit ? "bulbOn" : "bulb"} className="size-[11px]" />
              <Icon name={n.icon} className="size-3" />
            </>
          ) : (
            <>
              <Branch box={!n.leaf} minus={n.open} />
              <Icon name={n.icon} className="size-3" />
            </>
          )}
          <span
            className={clsx(
              "ml-0.5 px-px text-[8px] leading-3 whitespace-nowrap",
              n.bold && "font-bold",
              n.lit && "bg-[#f0f0f0]"
            )}
          >
            {n.label}
          </span>
        </li>
      ))}
    </ul>
  );
}

function Explorer() {
  return (
    <aside className="flex w-[178px] shrink-0 flex-col border-r border-[#8c969c] pr-1 pl-0.5">
      <div className="flex h-[14px] items-center gap-1 pr-0.5">
        <div className="h-1 flex-1 border-y border-[#a8a8a8]" />
        <button type="button" aria-label="Float panel">
          <svg viewBox="0 0 7 7" className="size-[7px]" aria-hidden="true">
            <path d="M2.5.5h4v3h-4zM.5 3h4v3.5h-4z" fill="#f0f0f0" stroke="#777" />
          </svg>
        </button>
        <button type="button" aria-label="Close panel">
          <svg viewBox="0 0 7 7" className="size-[7px]" aria-hidden="true">
            <path d="m1 1 5 5M6 1 1 6" stroke="#555" strokeWidth="1.3" />
          </svg>
        </button>
      </div>
      <div className="flex flex-1 flex-col border-t border-l border-[#707070]">
        <div className="flex h-[26px] items-stretch gap-px pl-0.5">
          <button type="button" aria-label="Explorer" className="flex w-7 items-center justify-center bg-white">
            <Icon name="explorer" />
          </button>
          <button type="button" aria-label="Browser" className="flex w-[22px] items-center justify-center border-r border-[#ddd]">
            <Icon name="globe" />
          </button>
          <button type="button" aria-label="Recycle bin" className="flex w-6 items-center justify-center border-r border-[#ddd]">
            <Icon name="bin" />
          </button>
        </div>
        <div className="mr-1 flex-1 bg-white pb-2">
          <Tree />
        </div>
      </div>
    </aside>
  );
}

function Part() {
  return (
    <svg viewBox="178 137 761 330" className="h-full w-full" role="img" aria-label="Toolpath on model">
      <defs>
        <pattern id="passes" width="3" height="2" patternUnits="userSpaceOnUse" patternTransform="rotate(30)">
          <path d="M0 .5h2" stroke="#07a52c" strokeWidth="0.8" />
        </pattern>
        <pattern id="dense" width="3" height="2" patternUnits="userSpaceOnUse" patternTransform="rotate(30)">
          <path d="M0 1h2" stroke="#0b7a40" strokeWidth="0.9" />
        </pattern>
        <linearGradient id="skin" x1="0" y1="0" x2="0.4" y2="1">
          <stop offset="0" stopColor="#12ff28" />
          <stop offset="0.55" stopColor="#0af51c" />
          <stop offset="0.75" stopColor="#04e412" />
          <stop offset="1" stopColor="#10fb1e" />
        </linearGradient>
      </defs>

      {/* stock block */}
      <path d="M414 250 478 213 622 295V375L557 412 414 331z" fill="#383c4e" />
      <path d="M414 250 478 213 622 295" fill="none" stroke="#4c5266" strokeWidth="0.7" />

      {/* model faces */}
      <path d="M413 271 450 291 518 345 524 359 557 379V413L414 331z" fill="#256694" />
      <path d="M557 378 572 371 600 352 611 333 622 327V375L557 413z" fill="#23608d" />

      {/* machined skin */}
      <path
        d="M427 263Q436 255 444 244 455 229 466 221L495 235 507 228Q526 233 541 245 566 264 584 285 593 295 597 311L586 319 611 333Q606 355 598 364 590 374 580 373L571 371 538 351 524 359Q520 345 509 337L450 291 461 283z"
        fill="url(#skin)"
      />
      <path d="M427 263 444 244Q456 228 466 221L495 235Q480 250 470 268L461 283z" fill="url(#passes)" opacity="0.35" />
      <path d="M461 283 520 318 552 336 520 343 465 292z" fill="#02d60e" opacity="0.5" />
      <path d="M611 333Q606 355 598 364 590 374 580 373L560 362 590 330z" fill="url(#passes)" opacity="0.35" />

      {/* stepped walls */}
      <path d="M453 294 463 289Q490 306 527 337L517 343Q480 313 453 294z" fill="#22b783" />
      <path d="M497 234 507 228 518 232Q550 252 583 286L568 290Q545 274 523 254 515 244 508 238z" fill="#1fbb72" />
      <g stroke="#9fe8c4" strokeWidth="0.7" fill="none">
        <path d="M462 298 471 292M468 303 477 297M474 307 484 301M481 313 490 306M487 318 497 311M494 323 503 316M500 328 510 321M506 334 516 327M511 338 521 331M515 341 525 334" />
        <path d="M514 240 523 235M519 246 530 240M526 252 537 246M533 258 544 252M540 264 552 258M547 270 559 264M555 276 567 270M563 282 574 277" />
        <path d="M495 235 507 228M499 237 511 229" />
      </g>

      {/* pockets */}
      <g fill="url(#dense)">
        <path d="M495 242 507 252V280Q499 262 495 242z" />
        <path d="M513 285Q520 272 535 277L556 286Q550 301 532 303 518 302 513 285z" />
        <path d="M558 293Q566 310 580 318L568 328Q556 326 550 334 534 338 523 324 548 320 558 293z" />
        <path d="M467 270 480 262 490 268 483 282 468 280z" opacity="0.6" />
        <path d="M541 347 552 343 565 348 552 352z" opacity="0.7" />
        <path d="M500 316 515 314 518 319 505 320z" opacity="0.7" />
      </g>
      <path d="M560 354 586 369 583 371 556 357z" fill="#1ab98a" />

      {/* flat lands */}
      <g fill="#3690e2" stroke="#cfe6ff" strokeWidth="0.8">
        <path d="M467 220 479 213 507 228 494 235z" />
        <path d="M414 271 426 264 461 283 449 290z" />
        <path d="M586 319 598 312 622 326 611 333z" />
        <path d="M524 359 538 351 571 371 557 378z" />
      </g>

      <path
        d="M427 263 413 271 449 290Q487 315 509 336 520 346 524 359L557 378 571 371Q588 379 598 364 607 354 611 333L624 326 597 311"
        fill="none"
        stroke="#10ee28"
        strokeWidth="1.4"
      />
      <path d="M413 271V331L557 413 622 375V328M557 379V413" fill="none" stroke="#dce8f0" strokeWidth="0.9" />

      {/* local axes */}
      <g fill="none" stroke="#d9efe0" strokeWidth="0.7">
        <path d="M512 285V241M508 250 512 240 516 250zM507 281V252M517 281V250M507 281 512 277 517 281" />
        <path d="M512 285 475 263M512 280 479 261M475 263 488 261 494 267z" />
        <path d="M512 280 541 262M517 275 540 289" strokeDasharray="3 1.5" />
        <circle cx="529" cy="275" r="1.8" />
        <circle cx="529" cy="295" r="1.8" />
      </g>
      <path d="M516 234h4v32l-2 2-2-2z" fill="#fdf403" />
      <path d="M516 230h5v3h-5z" fill="#a99a5d" />
      <g fill="#eef2f4" fontSize="10" className="font-['Roboto',sans-serif]">
        <text x="475" y="261">Y</text>
        <text x="555" y="261">X</text>
        <text x="538" y="297">X</text>
      </g>
    </svg>
  );
}

function Viewport() {
  return (
    <main className="relative min-w-0 flex-1 bg-linear-to-b from-[#2e495d] via-[#17242e] to-black">
      <div className="h-full">
        <Part />
      </div>
      {/* view cube */}
      <svg viewBox="0 0 32 36" className="absolute top-[9px] right-[10px] h-9 w-8" aria-hidden="true">
        <path d="M1 8 16 1l15 7-15 8z" fill="#9aa5ae" stroke="#b7c0c6" strokeWidth="0.6" />
        <path d="M1 8 16 16v18L2 26z" fill="#84909a" stroke="#aab4bb" strokeWidth="0.6" />
        <path d="M31 8 16 16v18l14-8z" fill="#8f9ba5" stroke="#aab4bb" strokeWidth="0.6" />
        <g fill="#55616b" fontSize="5" className="font-['Roboto',sans-serif]">
          <text x="11" y="10">TOP</text>
          <text x="4" y="20" transform="rotate(20 4 20)">LEFT</text>
          <text x="17" y="26" transform="rotate(-26 17 26)">FRONT</text>
        </g>
      </svg>
      {/* world axes */}
      <svg viewBox="0 0 46 40" className="absolute bottom-4 left-1 h-10 w-[46px]" aria-hidden="true">
        <path d="M19 32V16" stroke="#34d6dc" strokeWidth="1.4" />
        <path d="m19 12 2.5 6h-5z" fill="#34d6dc" />
        <path d="M19 32 5 24.5M19 32l13-7M3 23.5l6 .5-3 3.5zM34 23.5l-6 .5 3 3.5z" fill="none" stroke="#c4cace" strokeWidth="0.9" />
        <g fontSize="10" className="font-['Roboto',sans-serif]">
          <text x="5" y="21" fill="#e1e5e8">Y</text>
          <text x="36" y="21" fill="#e1e5e8">X</text>
          <text x="21" y="11" fill="#34d6dc">Z</text>
        </g>
      </svg>
    </main>
  );
}

function SideTool({ name, active, menu }: { name: string; active?: boolean; menu?: boolean }) {
  return (
    <button
      type="button"
      aria-label={name}
      className={clsx("relative flex h-[17px] w-[18px] items-center justify-center", active && "bg-[#bcdcf4]")}
    >
      <Icon name={name} className="size-[14px]" />
      {menu && (
        <svg viewBox="0 0 4 4" className="absolute right-0 bottom-0 size-1" aria-hidden="true">
          <path d="M4 0v4H0z" fill="#111" />
        </svg>
      )}
    </button>
  );
}

function SideBar() {
  const rule = <div className="my-[2px] h-px w-4 bg-[#b0b0b0]" />;
  return (
    <div className="flex w-[21px] shrink-0 flex-col items-center pt-px">
      <SideTool name="machine" />
      <SideTool name="cubeTop" menu />
      <SideTool name="cubeSide" menu />
      <SideTool name="cubeFront" menu />
      <SideTool name="cubeIso" menu />
      <SideTool name="zoomBack" />
      <SideTool name="refresh" />
      <SideTool name="zoomAll" menu />
      <SideTool name="zoomBox" />
      {rule}
      <SideTool name="block" active />
      {rule}
      <SideTool name="shaded" active menu />
      <SideTool name="wire" active />
      <div className="py-1">{rule}</div>
      <SideTool name="pick" menu />
      <div className="pt-0.5">
        <SideTool name="pickBack" />
      </div>
      <div className="w-full border-b border-[#b8b8b8] pt-1 pb-0.5">
        <CloseMark />
      </div>
    </div>
  );
}

export default function App() {
  return (
    <div className="flex min-h-screen flex-col bg-[#f0f0f0] font-['Open_Sans','Noto_Sans',sans-serif] text-[8px] text-gray-900">
      <header className="border-b border-[#a8a8a8] bg-white">
        <div className="flex h-[15px] items-center pl-0.5">
          <svg viewBox="0 0 10 10" className="size-[10px]" aria-hidden="true">
            <path d="M1 1h3v8H1z" fill="#a8601c" />
            <path d="M3 0h3q3.5.5 3.5 3.5T6 7H5v3H3z" fill="#e8933a" />
            <path d="M5 2.5h1q1 .2 1 1t-1 1H5z" fill="#fff" />
          </svg>
          <h1 className="ml-1 text-[8px] whitespace-pre">Autodesk PowerMill Ultimate 2017   [  * Hiçbiri ]</h1>
          <div className="ml-auto flex">
            <button type="button" aria-label="Minimize" className="flex w-8 justify-center">
              <svg viewBox="0 0 8 8" className="size-2"><path d="M0 4.5h8" stroke="#222" /></svg>
            </button>
            <button type="button" aria-label="Restore" className="flex w-8 justify-center">
              <svg viewBox="0 0 8 8" className="size-2">
                <path d="M.5 2.5h5v5h-5zM2.5 2.5v-2h5v5h-2" fill="none" stroke="#222" />
              </svg>
            </button>
            <button type="button" aria-label="Close" className="flex w-8 justify-center">
              <svg viewBox="0 0 8 8" className="size-2"><path d="m.5.5 7 7M7.5.5l-7 7" stroke="#222" /></svg>
            </button>
          </div>
        </div>
        <nav className="flex h-[15px] items-center gap-[9px] pl-[5px]">
          {["Dosya", "Görünüm", "Ekle", "Göster", "Araçlar", "Yardım"].map((item) => (
            <button key={item} type="button">{item}</button>
          ))}
        </nav>
      </header>

      <Bar>
        <Tools className="w-[34px]" names={["open", "save"]} />
        <Sep />
        <Tools className="w-4" names={["print"]} />
        <Sep />
        <Tools
          className="w-[142px]"
          names={["block", "rapid", "feeds", "ballTool", "leads", "startPoint", "dots", "toolCalc"]}
        />
        <Sep />
        <Tools className="w-4" names={["verify"]} />
        <Sep />
        <Tools className="w-4" names={["path"]} />
        <div className="ml-1 flex h-[17px] w-[134px] items-center bg-white">
          <Icon name="strategy" className="size-[15px]" />
          <Drop label="Strateji" value="Tarama Bitirme" className="flex-1 bg-linear-to-r from-[#f0f0f0] from-88% to-white to-88%" />
        </div>
        <Sep />
        <Tools className="w-[71px]" names={["collision", "machineOk", "calculator", "ruler"]} />
        <Sep />
        <Tools className="w-4" names={["expand"]} />
        <Sep />
        <Tools className="w-4" names={["components"]} />
        <CloseMark />
      </Bar>

      <Bar>
        <Tools className="w-4" names={["stock"]} />
        <Drop label="Stok model" value="" className="ml-0.5 w-[83px] bg-[#e2e2e2]" />
        <Tools className="ml-2 w-4" names={["treeOff"]} />
        <Drop label="Durum" value="" className="w-[85px] bg-[#cbcbcb]" />
        <Tools className="w-5" names={["refreshOff"]} />
        <Sep />
        <Tools className="w-[34px]" names={["tableOff", "tableCheckOff"]} />
        <Sep />
        <Tools className="w-[51px]" names={["stockOff", "open", "saveOff"]} />
        <Sep />
        <Tools className="w-[70px]" names={["cubeOff", "snakeOff", "toolOff", "treeCrossOff"]} />
        <Sep />
        <Tools className="w-[34px]" names={["gridOff", "wedgeOff"]} />
        <Sep />
        <Tools className="mr-1 w-4" names={["crossOff"]} />
        <CloseMark />
      </Bar>

      <Bar>
        <Drop label="Takım yolu" value="1_1" className="-ml-0.5 w-[87px] bg-[#e2e2e2]" />
        <Tools className="w-[18px]" names={["stockOff"]} />
        <Sep />
        <Tools
          className="w-[193px]"
          names={["spread", "wave", "waveGold", "clockTool", "toolsArc", "toolTurn", "recycle", "table", "copy", "clock", "cross"]}
        />
        <Sep />
        <Tools
          className="w-[175px]"
          active="passes"
          names={["passes", "leadLinks", "arcs", "redNodes", "nodesOff", "axesTool", "gearsOff", "greenSlashes", "redTrap", "tealTrap"]}
        />
        <Sep />
        <Tools className="w-[70px]" names={["inspect", "globeOff", "magnetOff", "simulate"]} />
        <CloseMark />
      </Bar>

      <Bar>
        <Tools className="w-4" names={["path"]} />
        <Drop label="Simülasyon yolu" value="2" className="ml-1 w-[88px] bg-[#e2e2e2]" />
        <Tools className="ml-2 w-[18px]" names={["toolbox"]} />
        <Drop label="Takım" value="1" className="w-[86px] bg-[#e2e2e2]" />
        <Tools className="ml-2 w-4" names={["bulb"]} />
        <Sep />
        <div className="ml-1 flex h-[17px] w-[31px] items-center bg-white pl-0.5">
          <span className="text-xs leading-[17px]">1</span>
          <svg viewBox="0 0 8 16" className="h-4 w-2 shrink-0" aria-hidden="true">
            {icons.pointMark}
          </svg>
          <Drop label="Nokta" value="" className="flex-1" />
        </div>
        <Tools className="ml-0.5 w-[88px]" names={["toFirst", "stepBack", "playOff", "stepOff", "toLastOff"]} />
        <input
          type="range"
          aria-label="Hız"
          defaultValue={92}
          className="mx-[6px] h-[15px] w-[50px] appearance-none bg-transparent [&::-webkit-slider-runnable-track]:h-0.5 [&::-webkit-slider-runnable-track]:bg-[#d4d4d4] [&::-webkit-slider-thumb]:-mt-[7px] [&::-webkit-slider-thumb]:h-4 [&::-webkit-slider-thumb]:w-[7px] [&::-webkit-slider-thumb]:appearance-none [&::-webkit-slider-thumb]:bg-[#0a78d4]"
        />
        <div className="ml-2 flex">
          <Sep />
        </div>
        <Tools className="w-[35px]" active="machineFire" names={["machineSim", "machineFire"]} />
        <div className="px-1">
          <CloseMark />
        </div>
      </Bar>

      <Bar>
        <Tools className="w-4" names={["record"]} />
        <Sep />
        <Tools
          className="w-[123px]"
          active="viewStepsOn"
          names={["viewStepsOn", "stepsA", "stepsB", "stepsC", "stepsB", "stepsD", "rotateOff"]}
        />
        <Sep />
        <Tools className="w-4" names={["stripesOff"]} />
        <Sep />
        <Tools className="w-[53px]" names={["boxesOff", "boxesOff", "saveOff"]} />
        <Sep />
        <Tools className="mr-0.5 w-4" names={["cameraOff"]} />
        <CloseMark />
      </Bar>

      <div className="flex flex-1 border-t border-[#a0a0a0]">
        <Explorer />
        <Viewport />
        <SideBar />
      </div>

      <footer className="border-t border-[#c8c8c8]">
        <Bar>
          <div className="flex h-[17px] w-8 items-center bg-white pl-0.5">
            <Icon name="newTool" />
            <Drop label="Yeni takım" value="" className="flex-1" />
          </div>
          <Tools className="ml-1 w-[53px]" names={["holderA", "holderB", "holderC"]} />
          <Drop label="Aktif takım" value="1" className="w-[87px] bg-[#e2e2e2]" />
          <Tools className="w-5" names={["stockOff"]} />
          <Sep />
          <Tools className="mr-8 w-[22px]" names={["toolTurn"]} />
          <Sep />
          <Tools className="w-[53px]" names={["axesPin", "pinRed", "pinGreen"]} />
          <Sep />
          <Tools className="mr-1 w-[34px]" names={["pencil", "cross"]} />
          <CloseMark />
        </Bar>
        <div className="flex h-[21px] items-center pl-0.5">
          <Tools className="w-[18px]" names={["planeAxes"]} />
          <Drop label="Çalışma düzlemi" value="" className="w-[62px] bg-[#e2e2e2]" />
          <Tools className="ml-1 w-[55px]" active="cubeZ" names={["cubeX", "cubeY", "cubeZ"]} />
          <Tools className="ml-2 w-[18px]" names={["grid"]} />
          <Field label="Izgara" value="" className="w-[38px]" />
          <div className="ml-2.5 flex gap-px">
            <Field label="X" value="-239,89" />
            <Field label="Y" value="-481,87" />
            <Field label="Z" value="0" />
          </div>
          <Tools className="w-[36px]" names={["listOff", "linkOff"]} />
          <Field label="Konum" value="" className="ml-0.5 w-[63px]" />
          <Tools className="ml-2 w-[18px]" names={["ncPause"]} />
          <Tools className="ml-2 w-[18px]" names={["scale"]} />
          <Field label="Birim" value="mm" />
          <Tools className="w-[19px]" names={["target"]} />
          <Field label="Tolerans" value="0,1" />
          <Tools className="w-[19px]" names={["thickness"]} />
          <Field label="Kalınlık" value="1,0" />
          <Tools className="w-[19px]" names={["diameter"]} />
          <Field label="Çap" value="6,0" />
          <Tools className="w-[19px]" names={["tipRadius"]} />
          <Field label="Uç yarıçapı" value="3,0" />
        </div>
      </footer>
    </div>
  );
}
